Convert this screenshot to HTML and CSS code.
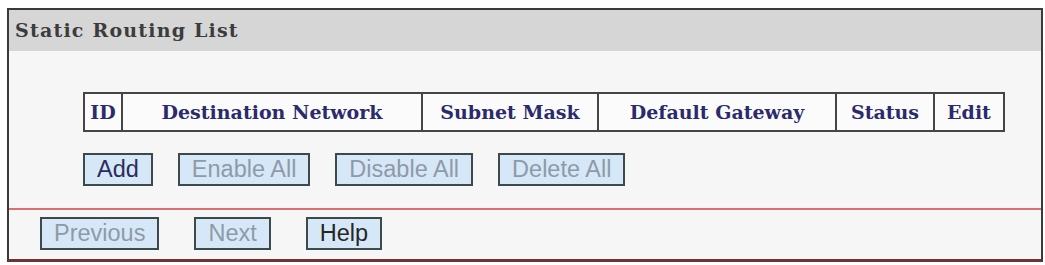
FILE: index.html
```html
<!DOCTYPE html>
<html>
    <head>
        <title>Static Routing List</title>
        <link rel="stylesheet" href="styles.css">
    </head>
    <body>
        <div class="panel">
            <div class="panel_title">Static Routing List</div>
            <div class="panel_body">
                <table class="route_table">
                    <tr>
                        <th class="col_id">ID</th>
                        <th class="col_dest">Destination Network</th>
                        <th class="col_mask">Subnet Mask</th>
                        <th class="col_gw">Default Gateway</th>
                        <th class="col_status">Status</th>
                        <th class="col_edit">Edit</th>
                    </tr>
                </table>
                <div class="btn_row">
                    <button type="button" class="btn">Add</button>
                    <button type="button" class="btn" disabled>Enable All</button>
                    <button type="button" class="btn" disabled>Disable All</button>
                    <button type="button" class="btn" disabled>Delete All</button>
                </div>
            </div>
            <div class="panel_foot">
                <button type="button" class="btn" disabled>Previous</button>
                <button type="button" class="btn" disabled>Next</button>
                <button type="button" class="btn btn_help">Help</button>
            </div>
        </div>
    </body>
</html>
```

FILE: styles.css
```css
body {
	margin: 8px 0 0 7px;
	background: #ffffff;
}
.panel {
	width: 1032px;
	border: 2px solid #3a3a3a;
	border-bottom: 3px solid #6b3434;
	background: #f6f6f6;
}
.panel_title {
	height: 41px;
	line-height: 40px;
	padding-left: 6px;
	background: #d6d6d6;
	font-family: "DejaVu Serif", serif;
	font-size: 19px;
	font-weight: bold;
	letter-spacing: 1.2px;
	color: #3c3c3c;
}
.panel_body {
	padding: 41px 0 22px 74px;
	border-bottom: 2px solid #d9706f;
}
.route_table {
	border-collapse: collapse;
	background: #fbfbfb;
}
.route_table th {
	height: 36px;
	padding: 0;
	border: 2px solid #454545;
	font-family: "DejaVu Serif", serif;
	font-size: 19px;
	font-weight: bold;
	color: #2a2a6c;
	text-align: center;
}
.col_id { width: 36px; }
.col_dest { width: 298px; }
.col_mask { width: 174px; }
.col_gw { width: 236px; }
.col_status { width: 96px; }
.col_edit { width: 68px; }
.btn_row {
	display: flex;
	gap: 25px;
	margin-top: 21px;
}
.panel_foot {
	display: flex;
	gap: 35px;
	padding: 7px 0 9px 31px;
}
.btn {
	height: 33px;
	padding: 0 12px;
	border: 2px solid #3d4a4c;
	border-radius: 0;
	background: #d6e8f8;
	font-family: "Liberation Sans", Arial, sans-serif;
	font-size: 23.5px;
	color: #2c2c5c;
}
.btn:disabled {
	color: #8e9aa8;
}
.btn_help {
	color: #262626;
}
```
